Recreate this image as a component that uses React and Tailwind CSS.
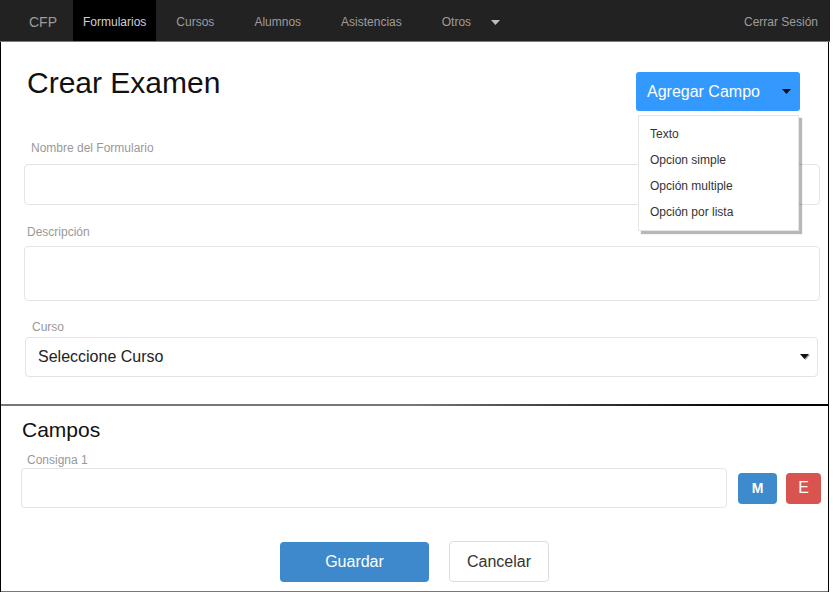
import React from 'react';

const NAV = ['Cursos', 'Alumnos', 'Asistencias'];
const MENU = ['Texto', 'Opcion simple', 'Opción multiple', 'Opción por lista'];

const Caret = ({ className, color = 'currentColor' }) => (
  <svg width="9" height="5" viewBox="0 0 9 5" className={className}>
    <path d="M0 0 L9 0 L4.5 5 Z" fill={color} />
  </svg>
);

const Navbar = () => (
  <div className="flex h-[42px] w-[830px] items-start border-b border-[#7a7a7a] bg-[#222] text-[12px] leading-[38px] text-[#9d9d9d]">
    <span className="ml-[29px] mr-[16px] h-[41px] pt-[3px] text-[14px]">CFP</span>
    <span className="h-[41px] bg-black px-[10px] pt-[3px] text-[#d0d0d0]">Formularios</span>
    {NAV.map((item) => (
      <span key={item} className="h-[41px] px-[20px] pt-[3px]">
        {item}
      </span>
    ))}
    <span className="flex h-[41px] items-center px-[20px] pt-[3px]">
      Otros
      <Caret className="ml-[20px]" color="#bdbdbd" />
    </span>
    <span className="ml-auto h-[41px] pr-[12px] pt-[3px]">Cerrar Sesión</span>
  </div>
);

const Label = ({ children, className = '' }) => (
  <div className={`text-[12px] leading-[17px] text-[#999] ${className}`}>{children}</div>
);

const AddFieldMenu = () => (
  <div className="relative mr-[20px] mt-[6px]">
    <button className="flex h-[39px] w-[164px] items-center rounded-[3px] bg-[#3399ff] pl-[11px] pr-[9px] text-[16px] text-white">
      Agregar Campo
      <Caret className="ml-auto" color="#111" />
    </button>
    <div className="absolute left-[2px] top-full mt-[4px] w-[161px] border border-[#e6e6e6] bg-white pb-[5px] pt-[5px] shadow-[3px_3px_1px_rgba(0,0,0,0.28)]">
      {MENU.map((item) => (
        <div key={item} className="pl-[11px] text-[12px] leading-[26px] text-[#333]">
          {item}
        </div>
      ))}
    </div>
  </div>
);

export default function App() {
  return (
    <div className="w-[830px] bg-white font-['Liberation_Sans',Arial,sans-serif]">
      <Navbar />

      <div className="w-[829px] border-x border-black">
        {/* Formulario */}
        <div className="pb-[27px] pl-[23px] pr-[8px]">
          <div className="flex items-start justify-between pt-[24px]">
            <h1 className="ml-[3px] text-[30px] leading-[33px] text-[#111]">Crear Examen</h1>
            <AddFieldMenu />
          </div>

          <Label className="ml-[7px] mt-[29px] mb-[7px]">Nombre del Formulario</Label>
          <div className="h-[41px] rounded-[4px] border border-[#e4e4e4]" />

          <Label className="ml-[3px] mt-[19px] mb-[5px]">Descripción</Label>
          <div className="h-[55px] rounded-[4px] border border-[#e4e4e4]" />

          <Label className="ml-[8px] mt-[18px] mb-[1px]">Curso</Label>
          <div className="ml-[1px] mr-[2px] flex h-[40px] items-center rounded-[4px] border border-[#e4e4e4] pl-[12px] pr-[8px] text-[16px] text-[#222]">
            Seleccione Curso
            <span className="relative ml-auto h-[6px] w-[9px]">
              <Caret className="absolute left-[1px] top-[1px]" color="#aaa" />
              <Caret className="absolute left-0 top-0" color="#111" />
            </span>
          </div>
        </div>

        <div className="h-[2px] bg-gradient-to-r from-[#777] via-[#777] to-black" />

        {/* Campos */}
        <div className="border-b border-[#777] pb-[9px] pl-[20px] pt-[12px]">
          <h2 className="ml-[1px] text-[21px] leading-[24px] text-[#111]">Campos</h2>
          <Label className="ml-[6px] mt-[10px] -mb-[1px]">Consigna 1</Label>
          <div className="flex items-center">
            <div className="h-[40px] w-[706px] rounded-[4px] border border-[#e4e4e4]" />
            <button className="ml-[11px] h-[31px] w-[39px] rounded-[4px] bg-[#3d8bcd] text-[14px] font-bold text-white">
              M
            </button>
            <button className="ml-[9px] h-[31px] w-[35px] rounded-[4px] bg-[#d9534f] text-[16px] text-white">
              E
            </button>
          </div>
          <div className="-ml-[20px] mt-[33px] flex items-center justify-center gap-[20px]">
            <button className="h-[40px] w-[149px] rounded-[4px] bg-[#3d89cb] text-[16px] text-white">
              Guardar
            </button>
            <button className="h-[41px] w-[100px] rounded-[4px] border border-[#ddd] bg-white text-[16px] text-[#333]">
              Cancelar
            </button>
          </div>
        </div>
      </div>
    </div>
  );
}
